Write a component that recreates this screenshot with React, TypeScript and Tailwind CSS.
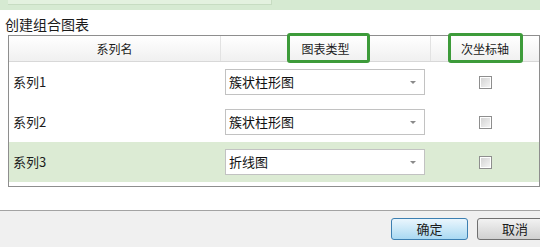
const rows = [
  { name: '系列1', type: '簇状柱形图', active: false },
  { name: '系列2', type: '簇状柱形图', active: false },
  { name: '系列3', type: '折线图', active: true },
]

function Dropdown({ value }: { value: string }) {
  return (
    <div className="ml-[4px] flex h-[26px] w-[200px] items-center justify-between border border-[#c2c2c2] bg-white pl-[3px] pr-[8px] text-[13px] text-[#111]">
      <span>{value}</span>
      <span className="h-0 w-0 border-x-[3px] border-t-[3px] border-x-transparent border-t-[#8a8a8a]" />
    </div>
  )
}

function Checkbox() {
  return (
    <div className="flex h-[13px] w-[13px] items-center justify-center border border-[#8e8e8e] bg-white">
      <div className="h-[9px] w-[9px] bg-gradient-to-br from-[#d4d4d4] to-[#f4f4f4]" />
    </div>
  )
}

export default function App() {
  return (
    <div className="relative h-[248px] w-[540px] overflow-hidden bg-white font-['Noto_Sans_CJK_SC',sans-serif] text-[#1b1b1b]">
      {/* top strip of the ribbon above */}
      <div className="flex h-[10px] bg-[#d6ead2]">
        <div className="ml-[8px] h-[5px] w-[264px] border-r border-b border-[#c7dcc2] bg-[#e3f1df]" />
      </div>

      <div className="h-[25px] pl-[5px] pt-[4px] text-[14px] leading-[20px]">创建组合图表</div>

      {/* table */}
      <div className="ml-[8px] w-[532px] border border-[#8e8e8e] pb-[4px]">
        <div className="grid h-[26px] grid-cols-[212px_210px_1fr] border-b border-[#d8d8d8] bg-gradient-to-b from-white to-[#f0f0f0] text-[12px]">
          <div className="flex items-center justify-center border-r border-[#e2e2e2]">系列名</div>
          <div className="flex items-center justify-center border-r border-[#e2e2e2]">图表类型</div>
          <div className="flex items-center justify-center">次坐标轴</div>
        </div>
        {rows.map((r) => (
          <div
            key={r.name}
            className={`grid h-[40px] grid-cols-[212px_210px_1fr] items-center ${r.active ? 'bg-[#dcebd4]' : 'bg-white'}`}
          >
            <div className="pl-[4px] text-[13px]">{r.name}</div>
            <Dropdown value={r.type} />
            <div className="flex justify-center">
              <Checkbox />
            </div>
          </div>
        ))}
      </div>

      {/* annotation boxes */}
      <div className="absolute left-[287px] top-[33px] h-[30px] w-[83px] rounded-[3px] border-[3px] border-[#3d9b3a]" />
      <div className="absolute left-[448px] top-[33px] h-[30px] w-[75px] rounded-[3px] border-[3px] border-[#3d9b3a]" />

      {/* footer */}
      <div className="mt-[23px] flex h-[37px] items-center gap-[9px] border-t border-[#a3a3a3] bg-[#f0f0f0] pl-[391px] text-[13px]">
        <button className="h-[22px] w-[77px] shrink-0 rounded-[3px] border border-[#3c7fb1] bg-gradient-to-b from-[#eaf6fd] to-[#a9d9f2]">
          确定
        </button>
        <button className="h-[22px] w-[76px] shrink-0 rounded-[3px] border border-[#707070] bg-gradient-to-b from-[#f2f2f2] to-[#d0d0d0]">
          取消
        </button>
      </div>
    </div>
  )
}
